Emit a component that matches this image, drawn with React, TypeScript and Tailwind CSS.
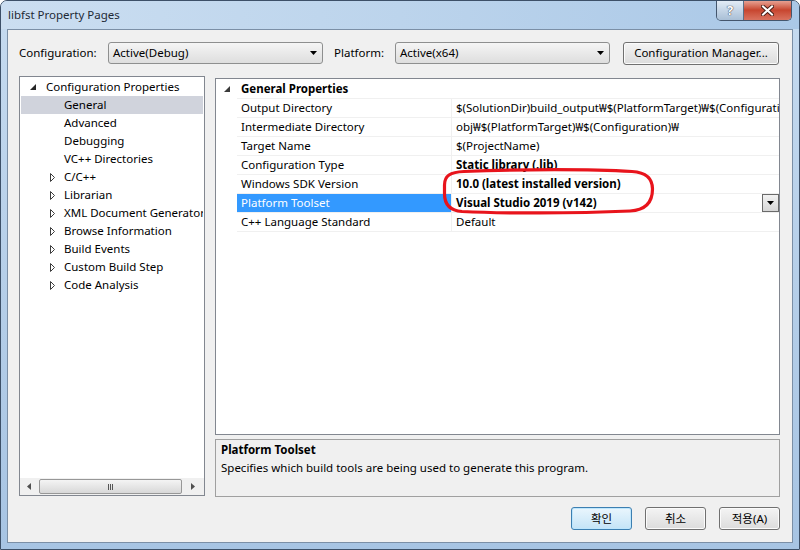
import React from 'react'

type TreeItem = { label: string; level: 0 | 1; icon?: 'open' | 'closed'; selected?: boolean }

const treeItems: TreeItem[] = [
  { label: 'Configuration Properties', level: 0, icon: 'open' },
  { label: 'General', level: 1, selected: true },
  { label: 'Advanced', level: 1 },
  { label: 'Debugging', level: 1 },
  { label: 'VC++ Directories', level: 1 },
  { label: 'C/C++', level: 1, icon: 'closed' },
  { label: 'Librarian', level: 1, icon: 'closed' },
  { label: 'XML Document Generator', level: 1, icon: 'closed' },
  { label: 'Browse Information', level: 1, icon: 'closed' },
  { label: 'Build Events', level: 1, icon: 'closed' },
  { label: 'Custom Build Step', level: 1, icon: 'closed' },
  { label: 'Code Analysis', level: 1, icon: 'closed' },
]

type Prop = { name: string; value: string; bold?: boolean; selected?: boolean }

const props: Prop[] = [
  { name: 'Output Directory', value: '$(SolutionDir)build_output₩$(PlatformTarget)₩$(Configuration)₩' },
  { name: 'Intermediate Directory', value: 'obj₩$(PlatformTarget)₩$(Configuration)₩' },
  { name: 'Target Name', value: '$(ProjectName)' },
  { name: 'Configuration Type', value: 'Static library (.lib)', bold: true },
  { name: 'Windows SDK Version', value: '10.0 (latest installed version)', bold: true },
  { name: 'Platform Toolset', value: 'Visual Studio 2019 (v142)', bold: true, selected: true },
  { name: 'C++ Language Standard', value: 'Default' },
]

function OpenArrow({ color = '#262626' }: { color?: string }) {
  return (
    <svg width="6" height="6" viewBox="0 0 6 6">
      <polygon points="6,0 6,6 0,6" fill={color} />
    </svg>
  )
}

function ClosedArrow() {
  return (
    <svg width="5" height="9" viewBox="0 0 5 9">
      <polygon points="0.5,0.5 4.5,4.5 0.5,8.5" fill="#fff" stroke="#3c3c3c" strokeWidth="1" />
    </svg>
  )
}

function DownCaret() {
  return (
    <svg width="7" height="4" viewBox="0 0 7 4">
      <polygon points="0,0 7,0 3.5,4" fill="#000" />
    </svg>
  )
}

function ComboBox({ value }: { value: string }) {
  return (
    <div className="flex h-[22px] w-[215px] items-center justify-between rounded-[3px] border border-[#8e8f8f] bg-gradient-to-b from-[#f5f5f5] to-[#dedede] pl-[4px] pr-[5px]">
      <span className="leading-[16px]">{value}</span>
      <DownCaret />
    </div>
  )
}

function DialogButton({ label, primary, width }: { label: string; primary?: boolean; width: string }) {
  return (
    <div
      className={
        primary
          ? `flex h-[23px] ${width} items-center justify-center rounded-[3px] border border-[#3c7fb1] bg-gradient-to-b from-[#eaf6fd] to-[#c4e4f7] shadow-[inset_0_0_0_1px_#bde6fd]`
          : `flex h-[23px] ${width} items-center justify-center rounded-[3px] border border-[#707070] bg-gradient-to-b from-[#f4f4f4] to-[#dcdcdc] shadow-[inset_0_0_0_1px_#fbfbfb]`
      }
    >
      <span className="leading-[16px]">{label}</span>
    </div>
  )
}

function TreePanel() {
  return (
    <div className="flex h-[420px] w-[186px] flex-col border border-[#828790] bg-white">
      <div className="flex-1 pt-[1px]">
        {treeItems.map((it) => (
          <div
            key={it.label}
            className={`mx-[1px] flex h-[18px] items-center overflow-hidden whitespace-nowrap ${
              it.selected ? 'bg-[#d0d3dc]' : ''
            } ${it.level === 0 ? 'pl-[9px]' : 'pl-[29px]'}`}
          >
            <div className={`flex shrink-0 items-center ${it.level === 0 ? 'w-[16px]' : 'w-[14px]'}`}>
              {it.icon === 'open' && <OpenArrow />}
              {it.icon === 'closed' && <ClosedArrow />}
            </div>
            <span className="leading-[16px]">{it.label}</span>
          </div>
        ))}
      </div>
      <div className="flex h-[17px] items-center bg-[#f0f0f0]">
        <div className="flex w-[18px] items-center justify-center">
          <svg width="4" height="7" viewBox="0 0 4 7">
            <polygon points="4,0 4,7 0,3.5" fill="#505050" />
          </svg>
        </div>
        <div className="ml-[1px] flex h-[15px] w-[143px] items-center justify-center rounded-[2px] border border-[#979797] bg-gradient-to-b from-[#f4f4f4] to-[#d8d8d8]">
          <div className="flex gap-[1px]">
            <div className="h-[6px] w-[1px] bg-[#555]" />
            <div className="h-[6px] w-[1px] bg-[#555]" />
            <div className="h-[6px] w-[1px] bg-[#555]" />
          </div>
        </div>
        <div className="flex flex-1 items-center justify-center">
          <svg width="4" height="7" viewBox="0 0 4 7">
            <polygon points="0,0 0,7 4,3.5" fill="#505050" />
          </svg>
        </div>
      </div>
    </div>
  )
}

function PropertyGrid() {
  return (
    <div className="relative h-[357px] border border-[#828790] bg-white">
      <div className="flex h-[20px]">
        <div className="flex w-[21px] shrink-0 items-center justify-center pb-[1px]">
          <OpenArrow color="#3a3a3a" />
        </div>
        <div className="flex-1 border-b border-[#f0f0f0] pl-[4px] font-bold leading-[19px]">General Properties</div>
      </div>
      {props.map((p) => (
        <div key={p.name} className="flex h-[19px]">
          <div className="w-[21px] shrink-0" />
          <div className="flex min-w-0 flex-1 border-b border-[#f0f0f0]">
            <div
              className={`w-[215px] shrink-0 border-r border-[#f0f0f0] pl-[4px] leading-[18px] whitespace-nowrap ${
                p.selected ? 'bg-[#3399ff] text-white' : ''
              }`}
            >
              {p.name}
            </div>
            <div className="flex min-w-0 flex-1 items-start overflow-hidden">
              <span className={`min-w-0 flex-1 overflow-hidden whitespace-nowrap pl-[4px] leading-[18px] ${p.bold ? 'font-bold' : ''}`}>
                {p.value}
              </span>
              {p.selected && (
                <div className="flex h-[18px] w-[17px] shrink-0 items-center justify-center border border-[#6a6a6a] bg-gradient-to-b from-[#f2f2f2] to-[#d6d6d6]">
                  <DownCaret />
                </div>
              )}
            </div>
          </div>
        </div>
      ))}
      <svg
        className="pointer-events-none absolute left-[226px] top-[88px]"
        width="214"
        height="48"
        viewBox="0 0 214 48"
      >
        <path
          d="M 22 4.5 C 80 2, 150 2, 190 4.5 C 205 5.5, 210.5 12, 210.5 22 C 210.5 34, 205 43, 188 44 C 130 46.5, 60 46.5, 20 44.5 C 7 43.5, 2.5 37, 2.5 27 L 2.5 18 C 2.5 9, 8 5, 22 4.5 Z"
          fill="none"
          stroke="#e8141c"
          strokeWidth="3.2"
        />
      </svg>
    </div>
  )
}

export default function App() {
  return (
    <div className="relative h-[550px] w-[800px] overflow-hidden rounded-t-[7px] border border-[#3d5068] bg-gradient-to-b from-[#c6dbf0] via-[#b6cfe9] to-[#a7c4e3] font-['Noto_Sans','Noto_Sans_CJK_KR',sans-serif] text-[11.5px] text-black">
      <div className="flex h-[28px] items-start justify-between bg-gradient-to-r from-[#cbdef1] via-[#bcd4ec] to-[#aac8e7]">
        <div className="pl-[7px] pt-[6px] leading-[16px] text-[#1e2a36]">libfst Property Pages</div>
        <div className="-mt-[1px] mr-[7px] flex h-[21px] overflow-hidden rounded-b-[5px] border border-t-0 border-[#44566d]">
          <div className="flex w-[27px] items-center justify-center border-r border-[#5d6f86] bg-gradient-to-b from-[#e6eef7] via-[#c6d6e7] to-[#a9bfd6]">
            <span className="text-[13px] leading-[14px] font-bold text-white [text-shadow:0_0_1px_#334,0_0_1px_#334]">?</span>
          </div>
          <div className="flex w-[47px] items-center justify-center bg-gradient-to-b from-[#e9a99c] via-[#c7452f] to-[#d9725f]">
            <svg width="13" height="11" viewBox="0 0 13 11">
              <path d="M2 1.5 L11 9.5 M11 1.5 L2 9.5" stroke="#4a1f18" strokeWidth="4" strokeLinecap="square" />
              <path d="M2 1.5 L11 9.5 M11 1.5 L2 9.5" stroke="#fff" strokeWidth="2" strokeLinecap="square" />
            </svg>
          </div>
        </div>
      </div>
      <div className="ml-[6px] flex h-[514px] w-[786px] flex-col border border-[#7b8fa6] bg-[#f0f0f0]">
        <div className="mt-[12px] flex h-[22px] items-center pl-[11px]">
          <span className="w-[89px] leading-[16px]">Configuration:</span>
          <ComboBox value="Active(Debug)" />
          <span className="ml-[11px] w-[61px] leading-[16px]">Platform:</span>
          <ComboBox value="Active(x64)" />
          <div className="ml-[13px]">
            <DialogButton label="Configuration Manager..." width="w-[156px]" />
          </div>
        </div>
        <div className="mt-[12px] flex h-[421px] pl-[11px]">
          <TreePanel />
          <div className="ml-[10px] flex w-[565px] flex-col pt-[2px]">
            <PropertyGrid />
            <div className="mt-[4px] h-[58px] border border-[#a0a0a0] bg-[#f0f0f0] px-[5px] pt-[1px] leading-[18px]">
              <div className="font-bold">Platform Toolset</div>
              <div>Specifies which build tools are being used to generate this program.</div>
            </div>
          </div>
        </div>
        <div className="mt-[10px] flex justify-end gap-[13px] pr-[12px]">
          <DialogButton label="확인" primary width="w-[61px]" />
          <DialogButton label="취소" width="w-[61px]" />
          <DialogButton label="적용(A)" width="w-[61px]" />
        </div>
      </div>
    </div>
  )
}
